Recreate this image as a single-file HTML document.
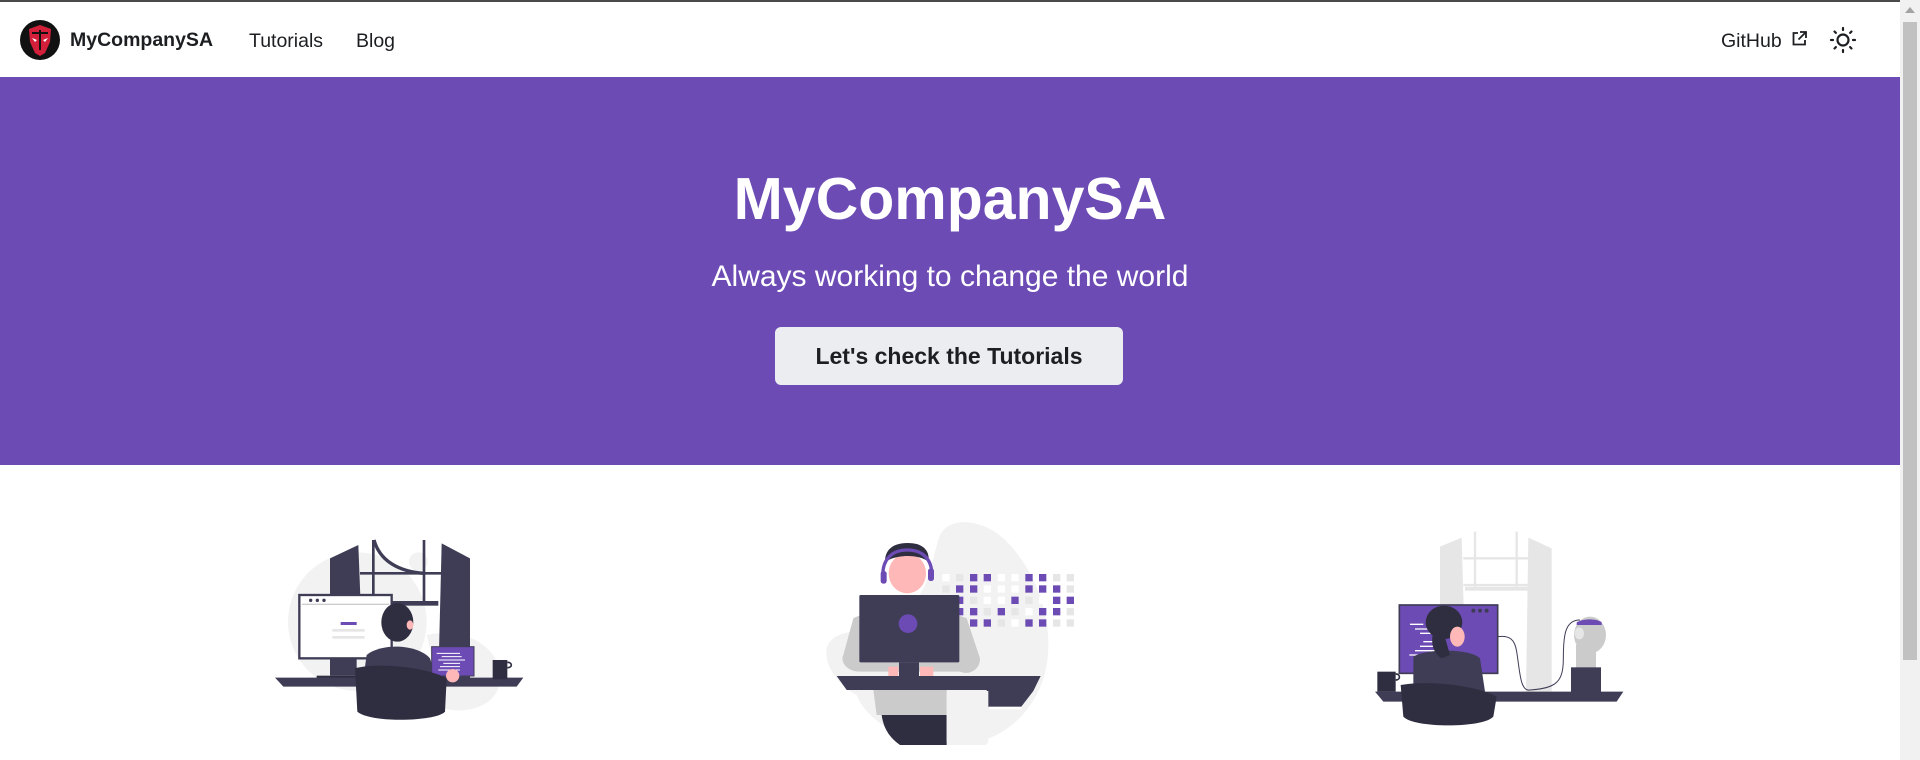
<!DOCTYPE html>
<html><head><meta charset="utf-8"><style>
*{margin:0;padding:0;box-sizing:border-box}
body{width:1920px;height:760px;overflow:hidden;background:#fff;font-family:"Liberation Sans",sans-serif;color:#1c1e21;position:relative}
.abs{position:absolute}
.topline{left:0;top:0;width:1920px;height:2px;background:#4a4a4a}
.nav{left:0;top:2px;width:1900px;height:75px;background:#fff;box-shadow:0 1px 2px rgba(0,0,0,.1)}
.hero{left:0;top:77px;width:1900px;height:388px;background:#6c4bb4}
.t{white-space:nowrap}
.sb{left:1900px;top:0;width:20px;height:760px;background:#f1f1f1}
.thumb{left:1903px;top:22px;width:14px;height:638px;background:#c1c1c1}
</style></head><body>
<div class="abs topline"></div>
<div class="abs nav"></div>
<svg class="abs" style="left:20px;top:20px" width="40" height="40" viewBox="0 0 40 40">
<circle cx="20" cy="20" r="20" fill="#111"/>
<path d="M9 9 L20 5 L31 9 L30 22 L25 33 L20 36 L15 33 L10 22 Z" fill="#d2203a"/>
<path d="M12 18 L17 20 L15 22 Z M28 18 L23 20 L25 22 Z" fill="#fff"/>
<path d="M19 10 L21 10 L21 30 L19 30 Z M12 12 L28 12 L28 14 L12 14Z" fill="#111"/>
</svg>
<div class="abs t" style="left:70px;top:26px;font-size:19.5px;font-weight:bold;line-height:28px">MyCompanySA</div>
<div class="abs t" style="left:249px;top:27px;font-size:19.5px;line-height:28px">Tutorials</div>
<div class="abs t" style="left:356px;top:27px;font-size:19.5px;line-height:28px">Blog</div>
<div class="abs t" style="left:1721px;top:27px;font-size:19.5px;line-height:28px">GitHub</div>
<svg class="abs" style="left:1792px;top:31px" width="15" height="15" viewBox="0 0 15 15" fill="none" stroke="#1c1e21" stroke-width="1.8">
<path d="M6 2H1.5V13.5H13V9"/><path d="M8 1H14V7"/><path d="M14 1L6.5 8.5"/></svg>
<svg class="abs" style="left:1829px;top:26px" width="28" height="28" viewBox="0 0 28 28" fill="none" stroke="#1c1e21" stroke-width="2.2" stroke-linecap="round">
<circle cx="14" cy="14" r="5.5"/><path d="M14 2v2M14 24v2M2 14h2M24 14h2M5.5 5.5l1.4 1.4M21.1 21.1l1.4 1.4M5.5 22.5l1.4-1.4M21.1 6.9l1.4-1.4"/></svg>
<div class="abs hero"></div>
<div class="abs t" style="left:0;width:1900px;top:165px;text-align:center;font-size:59px;font-weight:bold;color:#fff;line-height:68px">MyCompanySA</div>
<div class="abs t" style="left:0;width:1900px;top:258px;text-align:center;font-size:30px;color:#fff;line-height:38px">Always working to change the world</div>
<div class="abs" style="left:775px;top:327px;width:348px;height:58px;background:#ebedf0;border-radius:6px"></div>
<div class="abs t" style="left:775px;width:348px;top:341px;text-align:center;font-size:23px;font-weight:bold;line-height:30px">Let's check the Tutorials</div>

<!-- left illustration -->
<svg class="abs" style="left:270px;top:525px" width="260" height="210" viewBox="0 0 780 630">
<circle cx="262" cy="290" r="208" fill="#f2f2f2"/>
<path d="M470 330 C600 300 700 380 690 470 C680 540 600 570 520 550 Z" fill="#f2f2f2"/>
<circle cx="445" cy="110" r="28" fill="#f2f2f2"/>
<path d="M180 100 L265 60 L272 240 L180 240 Z" fill="#3f3d56"/>
<path d="M515 55 L600 100 L600 460 L505 460 Z" fill="#3f3d56"/>
<path d="M310 45 V240 M462 45 V240 M270 145 H515" stroke="#3f3d56" stroke-width="8" fill="none"/>
<path d="M312 45 C330 110 390 140 462 145" stroke="#3f3d56" stroke-width="10" fill="none"/>
<rect x="360" y="228" width="145" height="14" fill="#3f3d56"/>
<rect x="88" y="210" width="277" height="190" fill="#fff" stroke="#3f3d56" stroke-width="7"/>
<circle cx="122" cy="226" r="5" fill="#3f3d56"/><circle cx="142" cy="226" r="5" fill="#3f3d56"/><circle cx="162" cy="226" r="5" fill="#3f3d56"/>
<rect x="96" y="236" width="262" height="4" fill="#ccc"/>
<rect x="212" y="291" width="48" height="9" fill="#6c4bb4"/>
<rect x="187" y="312" width="97" height="8" fill="#e6e6e6"/><rect x="187" y="333" width="97" height="8" fill="#e6e6e6"/>
<rect x="180" y="402" width="80" height="50" fill="#3f3d56"/><rect x="140" y="452" width="150" height="14" fill="#2f2e41"/>
<path d="M15 458 H760 L740 485 H40 Z" fill="#3f3d56"/>
<path d="M290 390 C330 355 440 355 480 400 L500 460 H280 Z" fill="#3f3d56"/>
<ellipse cx="382" cy="292" rx="48" ry="58" fill="#2f2e41"/>
<ellipse cx="420" cy="300" rx="10" ry="14" fill="#ffb8b8"/>
<rect x="485" y="365" width="127" height="88" fill="#6c4bb4" stroke="#3f3d56" stroke-width="3"/>
<path d="M500 385h70M515 395h60M505 405h80M520 415h50M510 425h60M505 435h65" stroke="#fff" stroke-width="3"/>
<circle cx="548" cy="452" r="20" fill="#ffb8b8"/>
<path d="M255 430 C330 410 480 430 530 460 L525 560 C500 590 300 595 262 560 Z" fill="#2f2e41"/>
<rect x="668" y="405" width="44" height="58" fill="#2f2e41"/>
<path d="M712 412 C728 412 728 428 712 428" stroke="#2f2e41" stroke-width="5" fill="none"/>
</svg>

<!-- middle illustration -->
<svg class="abs" style="left:820px;top:515px" width="260" height="230" viewBox="0 0 780 690">
<path d="M360 60 C390 0 500 10 570 90 C660 190 700 330 680 450 C660 570 560 690 400 690 C260 690 140 620 110 540 C70 520 10 460 20 400 C30 360 80 350 110 350 C170 340 230 300 280 260 C330 220 340 110 360 60 Z" fill="#f2f2f2"/>
<g>
<rect x="367" y="177" width="22" height="22" fill="#fff"/><rect x="408" y="177" width="22" height="22" fill="#e6e6e6"/><rect x="450" y="177" width="22" height="22" fill="#6c4bb4"/><rect x="491" y="177" width="22" height="22" fill="#6c4bb4"/><rect x="533" y="177" width="22" height="22" fill="#fff"/><rect x="574" y="177" width="22" height="22" fill="#fff"/><rect x="616" y="177" width="22" height="22" fill="#6c4bb4"/><rect x="657" y="177" width="22" height="22" fill="#6c4bb4"/><rect x="699" y="177" width="22" height="22" fill="#e6e6e6"/><rect x="740" y="177" width="22" height="22" fill="#e6e6e6"/>
<rect x="367" y="211" width="22" height="22" fill="#e6e6e6"/><rect x="408" y="211" width="22" height="22" fill="#6c4bb4"/><rect x="450" y="211" width="22" height="22" fill="#6c4bb4"/><rect x="491" y="211" width="22" height="22" fill="#fff"/><rect x="533" y="211" width="22" height="22" fill="#fff"/><rect x="574" y="211" width="22" height="22" fill="#fff"/><rect x="616" y="211" width="22" height="22" fill="#6c4bb4"/><rect x="657" y="211" width="22" height="22" fill="#6c4bb4"/><rect x="699" y="211" width="22" height="22" fill="#6c4bb4"/><rect x="740" y="211" width="22" height="22" fill="#e6e6e6"/>
<rect x="408" y="245" width="22" height="22" fill="#6c4bb4"/><rect x="450" y="245" width="22" height="22" fill="#e6e6e6"/><rect x="491" y="245" width="22" height="22" fill="#fff"/><rect x="533" y="245" width="22" height="22" fill="#fff"/><rect x="574" y="245" width="22" height="22" fill="#6c4bb4"/><rect x="616" y="245" width="22" height="22" fill="#e6e6e6"/><rect x="657" y="245" width="22" height="22" fill="#fff"/><rect x="699" y="245" width="22" height="22" fill="#6c4bb4"/><rect x="740" y="245" width="22" height="22" fill="#6c4bb4"/>
<rect x="408" y="279" width="22" height="22" fill="#6c4bb4"/><rect x="450" y="279" width="22" height="22" fill="#6c4bb4"/><rect x="491" y="279" width="22" height="22" fill="#e6e6e6"/><rect x="533" y="279" width="22" height="22" fill="#6c4bb4"/><rect x="574" y="279" width="22" height="22" fill="#e6e6e6"/><rect x="616" y="279" width="22" height="22" fill="#fff"/><rect x="657" y="279" width="22" height="22" fill="#6c4bb4"/><rect x="699" y="279" width="22" height="22" fill="#6c4bb4"/><rect x="740" y="279" width="22" height="22" fill="#e6e6e6"/>
<rect x="408" y="313" width="22" height="22" fill="#6c4bb4"/><rect x="450" y="313" width="22" height="22" fill="#6c4bb4"/><rect x="491" y="313" width="22" height="22" fill="#6c4bb4"/><rect x="533" y="313" width="22" height="22" fill="#e6e6e6"/><rect x="574" y="313" width="22" height="22" fill="#fff"/><rect x="616" y="313" width="22" height="22" fill="#6c4bb4"/><rect x="657" y="313" width="22" height="22" fill="#6c4bb4"/><rect x="699" y="313" width="22" height="22" fill="#e6e6e6"/><rect x="740" y="313" width="22" height="22" fill="#e6e6e6"/>
</g>
<path d="M100 310 C150 280 380 280 440 310 L480 430 C480 470 440 480 420 470 L120 470 C80 470 60 440 70 420 Z" fill="#cbcbcb"/>
<path d="M160 525 H380 V600 H170 Z" fill="#cbcbcb"/>
<path d="M185 600 H380 V690 H240 C210 670 190 640 185 600 Z" fill="#2f2e41"/>
<rect x="380" y="525" width="125" height="165" rx="12" fill="#f2f2f2"/>
<ellipse cx="262" cy="175" rx="56" ry="60" fill="#ffb8b8"/>
<path d="M195 140 C195 90 240 80 280 85 C320 90 330 120 325 140 C300 120 240 115 195 140 Z" fill="#2f2e41"/>
<path d="M190 200 C180 130 220 105 262 105 C305 105 340 130 335 190" stroke="#6c4bb4" stroke-width="10" fill="none"/>
<rect x="182" y="168" width="18" height="38" rx="8" fill="#6c4bb4"/><rect x="324" y="160" width="18" height="38" rx="8" fill="#6c4bb4"/>
<rect x="118" y="240" width="300" height="202" rx="4" fill="#3f3d56"/>
<circle cx="264" cy="326" r="28" fill="#6c4bb4"/>
<rect x="237" y="442" width="60" height="45" fill="#3f3d56"/>
<rect x="205" y="455" width="30" height="30" fill="#ffb8b8"/><rect x="300" y="455" width="40" height="30" fill="#ffb8b8"/>
<path d="M50 483 H662 L640 528 H500 L500 525 H80 Z" fill="#3f3d56"/>
<path d="M505 528 H640 L600 580 H505 Z" fill="#3f3d56"/>
<rect x="505" y="575" width="100" height="8" fill="#fff"/>
</svg>

<!-- right illustration -->
<svg class="abs" style="left:1370px;top:525px" width="260" height="210" viewBox="0 0 780 630">
<path d="M210 65 L275 38 L288 500 L210 500 Z" fill="#e6e6e6"/>
<path d="M475 38 L545 70 L545 500 L468 500 Z" fill="#e6e6e6"/>
<path d="M315 20 V185 M440 20 V185 M280 100 H475 M280 180 H475" stroke="#e6e6e6" stroke-width="7" fill="none"/>
<rect x="285" y="185" width="190" height="12" fill="#e6e6e6"/>
<path d="M15 500 H760 L740 530 H40 Z" fill="#3f3d56"/>
<rect x="88" y="240" width="295" height="205" fill="#6c4bb4" stroke="#3f3d56" stroke-width="5"/>
<path d="M120 298h40M135 312h50M150 325h40M160 350h40M150 364h60M135 377h90M118 390h80" stroke="#fff" stroke-width="4"/>
<circle cx="310" cy="257" r="6" fill="#3f3d56"/><circle cx="330" cy="257" r="6" fill="#3f3d56"/><circle cx="350" cy="257" r="6" fill="#3f3d56"/>
<path d="M383 335 C420 330 435 345 440 380 C450 440 450 500 480 495 C560 490 580 470 580 400 C580 330 585 285 630 285" stroke="#3f3d56" stroke-width="3" fill="none"/>
<ellipse cx="660" cy="330" rx="48" ry="55" fill="#cbcbcb"/>
<rect x="618" y="360" width="60" height="70" fill="#cbcbcb"/>
<path d="M620 292 C640 280 680 280 695 292 L695 300 H620 Z" fill="#6c4bb4"/>
<ellipse cx="628" cy="325" rx="14" ry="18" fill="#e6e6e6"/>
<rect x="603" y="427" width="90" height="75" fill="#3f3d56"/>
<path d="M130 395 C170 370 300 370 330 400 L345 500 H130 Z" fill="#3f3d56"/>
<ellipse cx="222" cy="292" rx="55" ry="50" fill="#2f2e41"/>
<ellipse cx="262" cy="335" rx="22" ry="30" fill="#ffb8b8"/>
<path d="M200 300 C180 330 180 380 215 400 L240 390 L220 320 Z" fill="#2f2e41"/>
<path d="M92 480 C170 465 320 480 380 515 L370 575 C340 610 130 610 100 575 Z" fill="#2f2e41"/>
<rect x="22" y="440" width="55" height="60" fill="#2f2e41"/>
<path d="M77 447 C92 447 92 465 77 465" stroke="#2f2e41" stroke-width="5" fill="none"/>
</svg>

<div class="abs sb"></div>
<div class="abs thumb"></div>
<svg class="abs" style="left:1904px;top:6px" width="12" height="8" viewBox="0 0 12 8"><path d="M6 1L11 7H1Z" fill="#a3a3a3"/></svg>
</body></html>
